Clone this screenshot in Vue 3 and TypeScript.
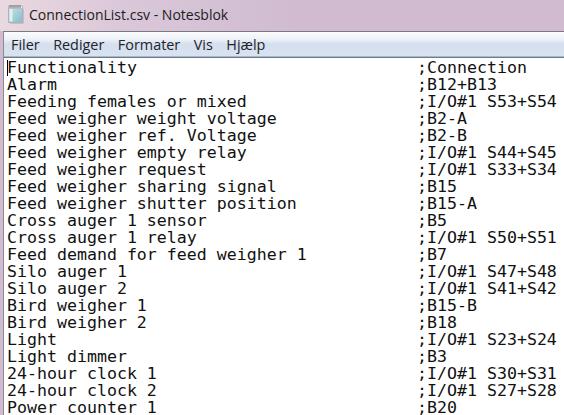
<script setup lang="ts">
const menus = ['Filer', 'Rediger', 'Formater', 'Vis', 'Hjælp']

const rows: [string, string][] = [
  ['Functionality', ';Connection'],
  ['Alarm', ';B12+B13'],
  ['Feeding females or mixed', ';I/O#1 S53+S54'],
  ['Feed weigher weight voltage', ';B2-A'],
  ['Feed weigher ref. Voltage', ';B2-B'],
  ['Feed weigher empty relay', ';I/O#1 S44+S45'],
  ['Feed weigher request', ';I/O#1 S33+S34'],
  ['Feed weigher sharing signal', ';B15'],
  ['Feed weigher shutter position', ';B15-A'],
  ['Cross auger 1 sensor', ';B5'],
  ['Cross auger 1 relay', ';I/O#1 S50+S51'],
  ['Feed demand for feed weigher 1', ';B7'],
  ['Silo auger 1', ';I/O#1 S47+S48'],
  ['Silo auger 2', ';I/O#1 S41+S42'],
  ['Bird weigher 1', ';B15-B'],
  ['Bird weigher 2', ';B18'],
  ['Light', ';I/O#1 S23+S24'],
  ['Light dimmer', ';B3'],
  ['24-hour clock 1', ';I/O#1 S30+S31'],
  ['24-hour clock 2', ';I/O#1 S27+S28'],
  ['Power counter 1', ';B20']
]
</script>

<template>
  <div class="window">
    <header class="titlebar">
      <svg class="app-icon" width="18" height="20" viewBox="0 0 18 20">
        <defs>
          <linearGradient id="pad" x1="0" y1="0" x2="1" y2="1">
            <stop offset="0" stop-color="#c4e4ea" />
            <stop offset="1" stop-color="#86bccb" />
          </linearGradient>
        </defs>
        <path d="M16.5 5v14.5h-13" fill="none" stroke="#c9bcc4" />
        <path d="M1.5 3.5h14v15h-14z" fill="url(#pad)" stroke="#aab4b8" />
        <path d="M2.5 5h3v12.5h-3z" fill="#ddf0f3" />
        <path d="M1.5 2h14v2.5h-14z" fill="#f1eff0" stroke="#a5a3a6" stroke-width="0.6" />
        <path d="M3 1v3M5 1v3M7 1v3M9 1v3M11 1v3M13 1v3" stroke="#5f6468" stroke-width="0.9" />
      </svg>
      <span class="title">ConnectionList.csv - Notesblok</span>
    </header>
    <div class="frame">
      <nav class="menubar">
        <span v-for="m in menus" :key="m">{{ m }}</span>
      </nav>
      <main class="editor">
        <span class="caret"></span>
        <div v-for="r in rows" :key="r[0]" class="row">
          <span class="name">{{ r[0] }}</span>
          <span>{{ r[1] }}</span>
        </div>
      </main>
    </div>
  </div>
</template>

<style scoped>
.window {
  width: 564px;
  height: 415px;
  overflow: hidden;
  display: flex;
  flex-direction: column;
  background: #d0bbd0;
}
.titlebar {
  height: 31px;
  flex: none;
  display: flex;
  align-items: center;
  gap: 4px;
  padding: 0 0 3px 7px;
  box-sizing: border-box;
  background: linear-gradient(90deg, #ead9e0 0, #dac8d9 120px, #d0bbd0 300px);
}
.app-icon {
  flex: none;
}
.title {
  font: 14px "Open Sans", "Liberation Sans", sans-serif;
  color: #1c1c1c;
}
.frame {
  flex: 1;
  min-height: 0;
  display: flex;
  flex-direction: column;
  margin-left: 3px;
  border-top: 1px solid #7d7780;
  border-left: 1px solid #8e8a92;
}
.menubar {
  height: 25px;
  flex: none;
  display: flex;
  align-items: center;
  gap: 13.5px;
  padding-left: 7px;
  box-sizing: border-box;
  background: linear-gradient(180deg, #fbfcfe 0, #eef2f8 30%, #d6dfed 50%, #d9e2f0 100%);
  border-bottom: 1px solid #a3b8cc;
  font: 14.4px "Open Sans", "Liberation Sans", sans-serif;
  color: #20242c;
}
.editor {
  position: relative;
  flex: 1;
  min-height: 0;
  overflow: hidden;
  padding: 1px 0 0 3px;
  background: #fff;
  border-top: 1px solid #6f7a86;
  font: 16.6px/17px "DejaVu Sans Mono", "Liberation Mono", monospace;
  color: #111;
}
.row {
  display: flex;
  height: 17px;
  white-space: pre;
}
.name {
  width: 410px;
  flex: none;
}
.caret {
  position: absolute;
  left: 3px;
  top: 2px;
  width: 1px;
  height: 16px;
  background: #000;
}
</style>
